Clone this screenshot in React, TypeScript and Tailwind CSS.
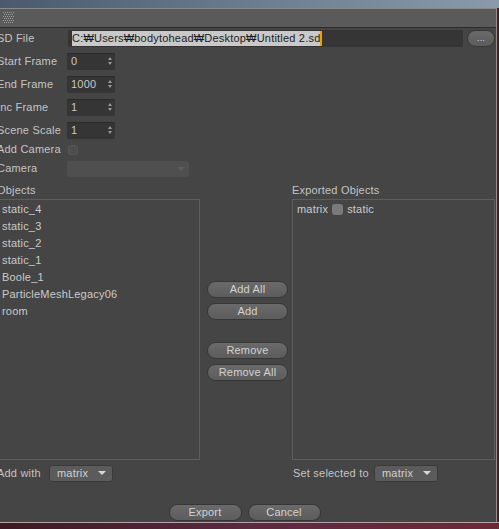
import React from 'react'

// ─── Small pieces ─────────────────────────────────────────────────────────────

function Spinner() {
  return (
    <span className="flex flex-col items-center gap-[2px] pr-[3px]">
      <span className="h-0 w-0 border-x-[2.5px] border-b-[3px] border-x-transparent border-b-[#9a9a9a]" />
      <span className="h-0 w-0 border-x-[2.5px] border-t-[3px] border-x-transparent border-t-[#9a9a9a]" />
    </span>
  )
}

function NumberField({ value }: { value: string }) {
  return (
    <div className="flex h-[17px] w-[48px] items-center justify-between rounded-[2px] bg-[#353535] pl-[4px] text-[#c8c8c8] shadow-[inset_0_1px_0_#2a2a2a]">
      <span>{value}</span>
      <Spinner />
    </div>
  )
}

function Row({ label, children, className = '' }: { label: string; children?: React.ReactNode; className?: string }) {
  return (
    <div className={`flex items-center ${className}`}>
      <span className="-ml-[3px] w-[70px] shrink-0 text-[#c4c4c4]">{label}</span>
      {children}
    </div>
  )
}

function PillButton({ children, className = '' }: { children: React.ReactNode; className?: string }) {
  return (
    <button className={`flex h-[17px] items-center justify-center rounded-full border border-[#363636] bg-gradient-to-b from-[#6a6a6a] to-[#5c5c5c] text-[#d2d2d2] ${className}`}>
      {children}
    </button>
  )
}

function Dropdown({ value, className = '' }: { value: string; className?: string }) {
  return (
    <div className={`flex h-[17px] items-center justify-between rounded-[3px] border border-[#3a3a3a] bg-[#5b5b5b] pl-[7px] pr-[6px] text-[#d0d0d0] ${className}`}>
      <span>{value}</span>
      <span className="h-0 w-0 border-x-[4px] border-t-[4px] border-x-transparent border-t-[#d8d8d8]" />
    </div>
  )
}

function Grip() {
  return (
    <svg width="11" height="12" viewBox="0 0 11 12">
      {Array.from({ length: 6 }).map((_, r) =>
        Array.from({ length: 6 }).map((__, c) => (
          <rect key={`${r}-${c}`} x={c * 2 + (r % 2)} y={r * 2} width="1" height="1" fill="#9c9c9c" />
        ))
      )}
    </svg>
  )
}

const objects = ['static_4', 'static_3', 'static_2', 'static_1', 'Boole_1', 'ParticleMeshLegacy06', 'room']

// ─── App ──────────────────────────────────────────────────────────────────────

export default function App() {
  return (
    <div
      className="flex h-[529px] w-[499px] flex-col overflow-hidden bg-[#4a1f2a] text-[11px] leading-none tracking-[0.2px]"
      style={{ fontFamily: '"Liberation Sans", "DejaVu Sans", sans-serif' }}
    >
      {/* Title bar remnant */}
      <div className="h-[8px] shrink-0 bg-gradient-to-r from-[#4a5a6c] via-[#6a7c8e] to-[#8a9aaa]" />

      <div className="flex h-[514px] w-[497px] shrink-0 flex-col overflow-hidden border-r border-[#8c8c8c] bg-[#454545]">
        {/* Toolbar */}
        <div className="flex h-[20px] shrink-0 items-center border-t border-b border-t-[#8a8a8a] border-b-[#2c2c2c] bg-[#5a5a5a] pl-[3px]">
          <Grip />
        </div>

        <div className="flex flex-1 flex-col pt-[1px]">
          {/* SD File */}
          <Row label="SD File" className="h-[18px]">
            <div className="ml-[1px] flex h-[17px] w-[395px] items-center rounded-[2px] bg-[#353535] pl-[4px]">
              <span className="bg-[#c9c9c9] py-[2px] text-[#1c1c1c]">C:₩Users₩bodytohead₩Desktop₩Untitled 2.sd</span>
              <span className="h-[15px] w-[2px] bg-[#f0a000]" />
            </div>
            <PillButton className="ml-[4px] w-[28px] rounded-[8px] text-[9px]">...</PillButton>
          </Row>

          <Row label="Start Frame" className="mt-[5px] h-[18px]">
            <NumberField value="0" />
          </Row>
          <Row label="End Frame" className="mt-[5px] h-[18px]">
            <NumberField value="1000" />
          </Row>
          <Row label="Inc Frame" className="mt-[5px] h-[18px]">
            <NumberField value="1" />
          </Row>
          <Row label="Scene Scale" className="mt-[5px] h-[18px]">
            <NumberField value="1" />
          </Row>
          <Row label="Add Camera" className="mt-[2px] h-[17px]">
            <span className="ml-[1px] h-[10px] w-[10px] rounded-[3px] bg-[#4e4e4e] shadow-[inset_0_0_0_1px_#555]" />
          </Row>
          <Row label="Camera" className="mt-[2px] h-[17px]">
            <div className="flex h-[16px] w-[122px] items-center justify-end rounded-[3px] bg-[#4f4f4f] pr-[4px]">
              <span className="h-0 w-0 border-x-[4px] border-t-[4px] border-x-transparent border-t-[#5e5e5e]" />
            </div>
          </Row>

          {/* Lists */}
          <div className="mt-[8px] flex">
            <div className="-ml-[3px] flex w-[203px] flex-col">
              <span className="h-[14px] text-[#c4c4c4]">Objects</span>
              <div className="flex h-[261px] flex-col border border-[#5e5e5e] pt-[1px] pl-[4px] text-[#cacaca]">
                {objects.map(o => (
                  <span key={o} className="flex h-[17px] items-center">{o}</span>
                ))}
              </div>
            </div>

            <div className="ml-[7px] flex w-[81px] flex-col pt-[96px]">
              <PillButton>Add All</PillButton>
              <PillButton className="mt-[5px]">Add</PillButton>
              <PillButton className="mt-[22px]">Remove</PillButton>
              <PillButton className="mt-[5px]">Remove All</PillButton>
            </div>

            <div className="ml-[4px] flex w-[203px] flex-col">
              <span className="h-[14px] text-[#c4c4c4]">Exported Objects</span>
              <div className="flex h-[261px] flex-col border border-[#5e5e5e] pt-[1px] pl-[4px] text-[#cacaca]">
                <span className="flex h-[17px] items-center gap-[4px]">
                  matrix
                  <span className="h-[11px] w-[11px] rounded-[3px] bg-[#7a7a7a]" />
                  static
                </span>
              </div>
            </div>
          </div>

          {/* Bottom selectors */}
          <div className="mt-[4px] flex h-[18px] items-center">
            <span className="-ml-[3px] w-[52px] text-[#c4c4c4]">Add with</span>
            <Dropdown value="matrix" className="w-[64px]" />
            <span className="ml-[180px] w-[81px] text-[#c4c4c4]">Set selected to</span>
            <Dropdown value="matrix" className="w-[64px]" />
          </div>

          {/* Export / Cancel */}
          <div className="mt-[22px] flex justify-center gap-[6px] pr-[7px]">
            <PillButton className="w-[73px]">Export</PillButton>
            <PillButton className="w-[73px]">Cancel</PillButton>
          </div>
        </div>
      </div>

      {/* Desktop strip */}
      <div className="h-[7px] shrink-0 border-t border-[#b8a0a8] bg-gradient-to-r from-[#3a1a22] via-[#5a2a40] to-[#6a2a38]" />
    </div>
  )
}
